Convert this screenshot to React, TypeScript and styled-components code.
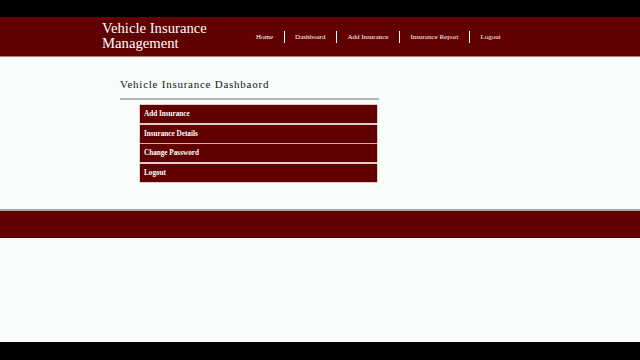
import styled, { createGlobalStyle } from "styled-components";

const maroon = "#600000";
const paper = "#f9fdfa";

const GlobalStyle = createGlobalStyle`
  html, body {
    margin: 0;
    padding: 0;
    background: #000;
    font-family: "Liberation Serif", "Times New Roman", serif;
  }
`;

const Screen = styled.div`
  width: 640px;
  height: 360px;
  padding-top: 17px;
  box-sizing: border-box;
  background: #000;
`;

const Page = styled.div`
  height: 325px;
  background: ${paper};
  display: flex;
  flex-direction: column;
`;

const Header = styled.header`
  height: 40px;
  background: ${maroon};
  display: flex;
  align-items: center;
  padding-left: 102px;
  border-bottom: 1px solid #b77;
  box-sizing: border-box;
`;

const Brand = styled.div`
  color: #fff;
  font-size: 14.7px;
  line-height: 15px;
  width: 143.5px;
  margin-top: -1px;
`;

const Nav = styled.nav`
  display: flex;
  align-items: center;
  margin-top: 1px;
`;

const NavLink = styled.a<{ $last?: boolean }>`
  color: #fff;
  font-size: 7px;
  line-height: 12px;
  padding: 0 10.5px;
  border-right: ${(p) => (p.$last ? "none" : "1px solid #fff")};
  text-decoration: none;
`;

const Main = styled.main`
  flex: 0 0 152px;
  padding: 20px 0 0 120px;
  box-sizing: border-box;
`;

const Title = styled.h1`
  margin: 0;
  font-size: 11px;
  font-weight: normal;
  letter-spacing: 0.75px;
  color: #151515;
  line-height: 14px;
  width: 259px;
  padding-bottom: 7px;
  border-bottom: 2px solid #b3b7bb;
`;

const Menu = styled.div`
  display: flex;
  flex-direction: column;
  gap: 1.5px;
  margin: 5px 0 0 20px;
  width: 237px;
`;

const MenuItem = styled.a`
  display: flex;
  align-items: center;
  height: 18px;
  padding-left: 4px;
  background: ${maroon};
  color: #fff;
  font-size: 7.2px;
  font-weight: bold;
  text-decoration: none;
  box-shadow: 0 0 0 0.5px #c99;
`;

const Footer = styled.footer`
  height: 29px;
  background: ${maroon};
  border-top: 2px solid #a8a8a8;
  box-sizing: border-box;
`;

const navItems = ["Home", "Dashboard", "Add Insurance", "Insurance Report", "Logout"];
const menuItems = ["Add Insurance", "Insurance Details", "Change Password", "Logout"];

export default function App() {
  return (
    <>
      <GlobalStyle />
      <Screen>
        <Page>
          <Header>
            <Brand>
              Vehicle Insurance
              <br />
              Management
            </Brand>
            <Nav>
              {navItems.map((item, i) => (
                <NavLink key={item} href="#" $last={i === navItems.length - 1}>
                  {item}
                </NavLink>
              ))}
            </Nav>
          </Header>
          <Main>
            <Title>Vehicle Insurance Dashbaord</Title>
            <Menu>
              {menuItems.map((item) => (
                <MenuItem key={item} href="#">
                  {item}
                </MenuItem>
              ))}
            </Menu>
          </Main>
          <Footer />
        </Page>
      </Screen>
    </>
  );
}
